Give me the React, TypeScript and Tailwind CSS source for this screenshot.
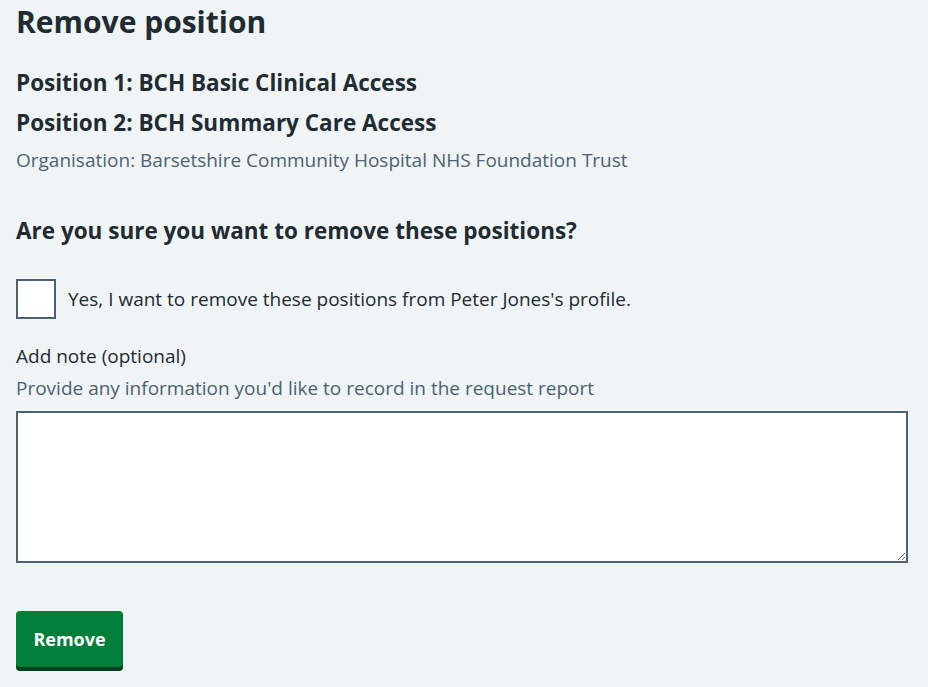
export default function App() {
  return (
    <div
      className="min-h-[687px] bg-[#f0f4f5] px-4 text-[#212b32]"
      style={{ fontFamily: '"Open Sans", Arial, sans-serif' }}
    >
      <h1 className="pt-[2px] text-[30px] font-bold leading-[40px]">Remove position</h1>

      <h2 className="mt-[25px] text-[22.5px] font-bold leading-[32px]">
        Position 1: BCH Basic Clinical Access
      </h2>
      <h2 className="mt-[8px] text-[22.5px] font-bold leading-[32px]">
        Position 2: BCH Summary Care Access
      </h2>
      <p className="mt-[7px] text-[19px] leading-[28px] text-[#4c6272]">
        Organisation: Barsetshire Community Hospital NHS Foundation Trust
      </p>

      <fieldset className="mt-[41px]">
        <legend className="text-[22.5px] font-bold leading-[32px]">
          Are you sure you want to remove these positions?
        </legend>
        <label className="mt-[32px] flex items-center gap-3">
          <span className="h-10 w-10 shrink-0 border-2 border-[#4c6272] bg-white" />
          <span className="text-[19px] leading-[28px]">
            Yes, I want to remove these positions from Peter Jones's profile.
          </span>
        </label>
      </fieldset>

      <div className="mt-[23px]">
        <label htmlFor="note" className="block text-[19px] leading-[28px]">
          Add note (optional)
        </label>
        <div className="mt-[4px] text-[19px] leading-[28px] text-[#4c6272]">
          Provide any information you'd like to record in the request report
        </div>
        <textarea
          id="note"
          className="mt-[9px] block h-[152px] w-[892px] border-2 border-[#4c6272] bg-white"
        />
      </div>

      <button className="mt-[48px] h-[56px] w-[107px] rounded-[4px] bg-[#007f3b] text-[18px] font-bold text-white shadow-[0_4px_0_#00401e]">
        Remove
      </button>
    </div>
  );
}
